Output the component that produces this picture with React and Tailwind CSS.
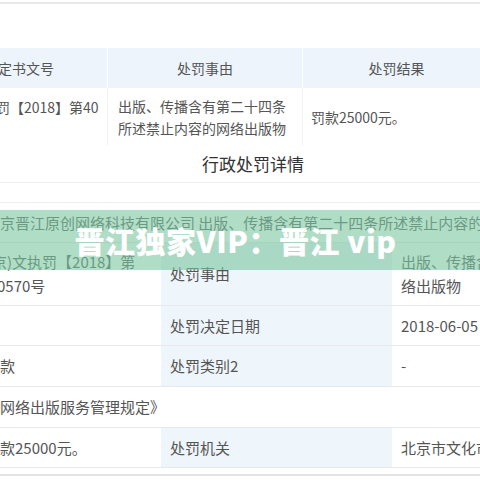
import React from 'react';

// Upper summary table + lower detail table, with the watermark banner on top.
const font = "font-['Noto_Sans_CJK_SC','Liberation_Sans',sans-serif]";

function DetailRow({ left, label, right, height = 'h-[40px]' }) {
  return (
    <div className={`grid grid-cols-[161px_231px_88px] ${height} border-b border-[#e7e9ec]`}>
      <div className="flex flex-col justify-center whitespace-nowrap overflow-hidden">{left}</div>
      <div className="bg-[#eef5fb] flex items-center pl-[9px] whitespace-nowrap">{label}</div>
      <div className="flex flex-col justify-center pl-[9px] whitespace-nowrap overflow-hidden">{right}</div>
    </div>
  );
}

export default function App() {
  return (
    <div className={`relative w-[480px] h-[480px] overflow-hidden bg-white text-[#555] ${font}`}>
      {/* top card edge */}
      <div className="mt-[2px] h-[2px] bg-[#e9e9e9]" />
      <div className="h-[44px]" />

      {/* summary table */}
      <div className="grid grid-cols-[108px_195px_177px] text-[14px] leading-[22px]">
        <div className="h-[40px] bg-[#edf4fb] flex items-center border-r border-white/80 whitespace-nowrap overflow-hidden">
          <span className="-ml-[2px]">定书文号</span>
        </div>
        <div className="h-[40px] bg-[#edf4fb] flex items-center justify-center border-r border-white/80">处罚事由</div>
        <div className="h-[40px] bg-[#edf4fb] flex items-center justify-center pl-[10px]">处罚结果</div>

        <div className="h-[58px] pt-[8px] border-r border-[#f1f3f6] whitespace-nowrap overflow-hidden">
          <span className="-ml-[4px] inline-block">罚【2018】第40</span>
        </div>
        <div className="h-[58px] flex flex-col justify-center pl-[10px] border-r border-[#f1f3f6]">
          <span>出版、传播含有第二十四条</span>
          <span>所述禁止内容的网络出版物</span>
        </div>
        <div className="h-[58px] flex items-center pl-[8px]">罚款25000元。</div>
      </div>

      <div className="h-[37px] flex items-center justify-center pl-[26px] text-[17px] text-[#333] border-b border-[#efefef]">
        行政处罚详情
      </div>
      <div className="h-[19px]" />

      {/* detail table */}
      <div className="border-t border-[#eceef0] text-[15px] leading-[24px]">
        <div className="h-[40px] flex items-center border-b border-[#e7e9ec] whitespace-nowrap overflow-hidden">
          京晋江原创网络科技有限公司 出版、传播含有第二十四条所述禁止内容的网络出版物
        </div>
        <DetailRow
          height="h-[63px]"
          left={<><span className="-ml-[8px]">京)文执罚【2018】第</span><span className="-ml-[3px]">0570号</span></>}
          label="处罚事由"
          right={<><span>出版、传播含有第二十四条</span><span>络出版物</span></>}
        />
        <DetailRow left={<span />} label="处罚决定日期" right={<span>2018-06-05</span>} />
        <DetailRow height="h-[41px]" left={<span>款</span>} label="处罚类别2" right={<span>-</span>} />
        <div className="h-[41px] flex items-center border-b border-[#e7e9ec] whitespace-nowrap">
          网络出版服务管理规定》
        </div>
        <DetailRow left={<span>款25000元。</span>} label="处罚机关" right={<span>北京市文化市场行政执法总队</span>} />
      </div>
      <div className="mt-[6px] h-[2px] bg-[#e4e4e4]" />

      {/* watermark banner */}
      <div className="absolute left-0 right-0 top-[210px] h-[60px] bg-[#7cc7a0]/60 flex items-center justify-center pr-[9px]">
        <span className="text-white text-[30px] font-black tracking-[0.5px]">晋江独家VIP：晋江 vip</span>
      </div>
    </div>
  );
}
